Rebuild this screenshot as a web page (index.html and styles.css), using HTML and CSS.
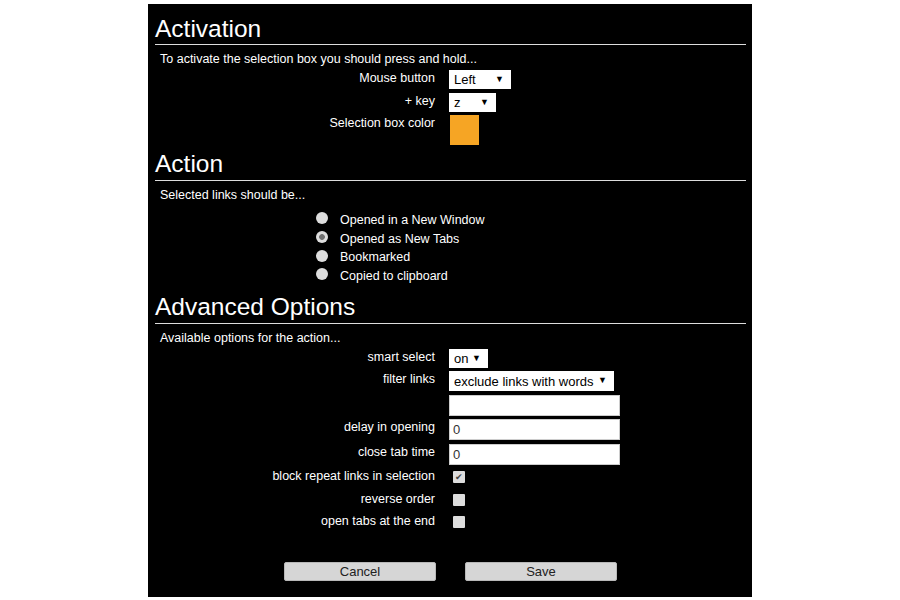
FILE: index.html
```html
<!DOCTYPE html>
<html lang="en">
<head>
    <meta charset="UTF-8">
    <title>Options</title>
    <link rel="stylesheet" href="styles.css">
</head>
<body>
    <div class="options">
        <h2>Activation</h2>
        <p class="intro">To activate the selection box you should press and hold...</p>
        <div class="form">
            <label>Mouse button</label>
            <span class="select select-mouse">
                <select><option>Left</option><option>Middle</option><option>Right</option></select>
            </span>
            <label>+ key</label>
            <span class="select select-key">
                <select><option>z</option><option>shift</option><option>ctrl</option></select>
            </span>
            <label>Selection box color</label>
            <span class="swatch"></span>
        </div>

        <h2>Action</h2>
        <p class="intro">Selected links should be...</p>
        <div class="radios">
            <label><input type="radio" name="action"> Opened in a New Window</label>
            <label><input type="radio" name="action" checked> Opened as New Tabs</label>
            <label><input type="radio" name="action"> Bookmarked</label>
            <label><input type="radio" name="action"> Copied to clipboard</label>
        </div>

        <h2>Advanced Options</h2>
        <p class="intro">Available options for the action...</p>
        <div class="form">
            <label>smart select</label>
            <span class="select select-smart">
                <select><option>on</option><option>off</option></select>
            </span>
            <label>filter links</label>
            <span class="select select-filter">
                <select><option>exclude links with words</option><option>include links with words</option></select>
            </span>
            <span></span>
            <input type="text" class="text">
            <label>delay in opening</label>
            <input type="text" class="text" value="0">
            <label>close tab time</label>
            <input type="text" class="text" value="0">
            <label>block repeat links in selection</label>
            <input type="checkbox" class="check" checked>
            <label>reverse order</label>
            <input type="checkbox" class="check">
            <label>open tabs at the end</label>
            <input type="checkbox" class="check">
        </div>

        <div class="buttons">
            <button class="button">Cancel</button>
            <button class="button">Save</button>
        </div>
    </div>
</body>
</html>
```

FILE: styles.css
```css
body {
    margin: 0;
    background-color: #fff;
    font-family: "Liberation Sans", Arial, sans-serif;
}

.options {
    box-sizing: border-box;
    width: 604px;
    height: 593px;
    margin: 4px auto 0;
    padding: 11.5px 6px 0 7px;
    background-color: #000;
    color: #fff;
}

h2 {
    margin: 0;
    padding-bottom: 2.5px;
    font-size: 24.5px;
    font-weight: normal;
    line-height: 26px;
    border-bottom: 1px solid #ddd;
}

.form + h2 {
    margin-top: 6px;
}

.radios + h2 {
    margin-top: 9px;
}

.intro {
    margin: 7px 0 3px 5px;
    font-size: 12.5px;
    line-height: 15px;
}

.form {
    display: grid;
    grid-template-columns: 280px 1fr;
    column-gap: 14px;
    row-gap: 3.5px;
    align-items: start;
    margin-top: 3px;
}

.form label {
    padding-top: 1px;
    font-size: 12.5px;
    line-height: 15px;
    text-align: right;
}

.select {
    position: relative;
    display: inline-block;
    justify-self: start;
}

.select select {
    appearance: none;
    -webkit-appearance: none;
    display: block;
    box-sizing: border-box;
    height: 19px;
    margin: 0;
    padding: 0 0 0 5px;
    border: none;
    border-radius: 0;
    background-color: #fff;
    color: #000;
    font-family: "Liberation Sans", Arial, sans-serif;
    font-size: 13px;
}

.select::after {
    content: "\25BC";
    position: absolute;
    top: 5px;
    right: 7px;
    font-size: 9px;
    line-height: 9px;
    color: #000;
    pointer-events: none;
}

.select-mouse select { width: 62px; }
.select-key select { width: 47px; }
.select-smart select { width: 39px; }
.select-filter select { width: 165px; height: 20px; }

.swatch {
    width: 29px;
    height: 30px;
    margin-left: 1px;
    background-color: #f6a524;
}

.text {
    box-sizing: border-box;
    width: 171px;
    height: 21px;
    margin: 0;
    padding: 0 3px;
    border: 1px solid #ccc;
    background-color: #fff;
    color: #333;
    font-family: "Liberation Sans", Arial, sans-serif;
    font-size: 13px;
}

.check {
    appearance: none;
    -webkit-appearance: none;
    position: relative;
    width: 12px;
    height: 12px;
    margin: 3px 0 4px 4px;
    border-radius: 1px;
    background-color: #ddd;
}

.check:checked::after {
    content: "\2714";
    position: absolute;
    top: 0;
    left: 2px;
    font-size: 9px;
    line-height: 12px;
    color: #444;
}

.radios {
    display: flex;
    flex-direction: column;
    margin-top: 8px;
    padding-left: 161px;
}

.radios label {
    display: flex;
    align-items: center;
    height: 18.7px;
    font-size: 12.5px;
}

.radios input {
    appearance: none;
    -webkit-appearance: none;
    width: 12px;
    height: 12px;
    margin: 0 12px 3px 0;
    border-radius: 50%;
    background-color: #ddd;
}

.radios input:checked {
    background: radial-gradient(circle, #6f6f6f 0 2.5px, #ddd 3.2px);
}

.buttons {
    display: flex;
    justify-content: center;
    gap: 29px;
    margin-top: 30px;
}

.button {
    width: 152px;
    height: 19px;
    padding: 0;
    border: 1px solid #b8b8b8;
    border-radius: 2px;
    background-color: #d6d6d6;
    color: #222;
    font-family: "Liberation Sans", Arial, sans-serif;
    font-size: 13px;
}
```
